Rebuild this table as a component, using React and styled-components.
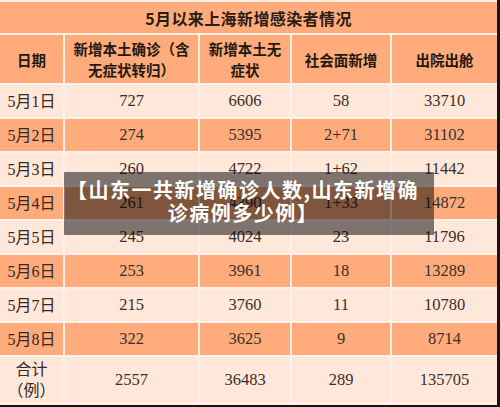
import React from 'react'
import styled, { createGlobalStyle } from 'styled-components'

const GlobalStyle = createGlobalStyle`
  html, body {
    margin: 0;
    padding: 0;
    background: #151515;
  }
`

const ORANGE = '#ffab7b'
const LIGHT = '#ffe7da'
const LINE = '#fff1e8'

const Frame = styled.div`
  position: relative;
  width: 497px;
  height: 405px;
  overflow: hidden;
  font-family: "Liberation Serif", "Noto Sans CJK SC", serif;
`

const Table = styled.table`
  width: 497px;
  table-layout: fixed;
  border-collapse: separate;
  border-spacing: 0;
  border-top: 2px solid ${LINE};
`

const Row = styled.tr`
  height: ${p => p.$h}px;
  background: ${p => (p.$tone === 'light' ? LIGHT : ORANGE)};
`

const TitleCell = styled.td`
  padding: 0;
  text-align: center;
  vertical-align: middle;
  border-bottom: 2px solid ${LINE};
  font-family: "Noto Sans CJK SC", sans-serif;
  font-weight: 700;
  font-size: 16px;
  letter-spacing: 0.4px;
  color: #2a1c12;
`

const HeadCell = styled.td`
  padding: 0 5px;
  text-align: center;
  vertical-align: middle;
  border-bottom: 2px solid ${LINE};
  border-right: ${p => (p.$last ? 'none' : `2px solid ${LINE}`)};
  font-family: "Noto Sans CJK SC", sans-serif;
  font-weight: 700;
  font-size: 14.5px;
  line-height: 21px;
  color: #231810;
`

const Cell = styled.td`
  padding: 0 4px;
  text-align: center;
  vertical-align: middle;
  border-bottom: 2px solid ${LINE};
  border-right: ${p => (p.$last ? 'none' : `2px solid ${LINE}`)};
  font-family: "Liberation Serif", "Noto Sans CJK SC", serif;
  font-size: 16.5px;
  line-height: 20px;
  color: #3a302a;
`

const DateCell = styled(Cell)`
  font-size: 16px;
  line-height: 21px;
  color: #332922;
`

const Overlay = styled.div`
  position: absolute;
  left: 64px;
  top: 172px;
  width: 370px;
  height: 63px;
  box-sizing: border-box;
  padding: 6px 12px 0 0;
  background: rgba(0, 0, 0, 0.5);
  color: #fff;
  text-align: center;
  font-family: "Noto Sans CJK SC", sans-serif;
  font-weight: 700;
  font-size: 20px;
  letter-spacing: 1.5px;
  line-height: 23px;
`

const rows = [
  ['5月1日', '727', '6606', '58', '33710'],
  ['5月2日', '274', '5395', '2+71', '31102'],
  ['5月3日', '260', '4722', '1+62', '11442'],
  ['5月4日', '261', '4390', '1+33', '14872'],
  ['5月5日', '245', '4024', '23', '11796'],
  ['5月6日', '253', '3961', '18', '13289'],
  ['5月7日', '215', '3760', '11', '10780'],
  ['5月8日', '322', '3625', '9', '8714']
]

export default function App () {
  return (
    <>
      <GlobalStyle />
      <Frame>
        <Table>
          <colgroup>
            <col style={{ width: 65 }} />
            <col style={{ width: 135 }} />
            <col style={{ width: 92 }} />
            <col style={{ width: 100 }} />
            <col style={{ width: 105 }} />
          </colgroup>
          <tbody>
            <Row $h={33}>
              <TitleCell colSpan={5}>5月以来上海新增感染者情况</TitleCell>
            </Row>
            <Row $h={50}>
              <HeadCell>日期</HeadCell>
              <HeadCell>新增本土确诊（含无症状转归）</HeadCell>
              <HeadCell>新增本土无症状</HeadCell>
              <HeadCell>社会面新增</HeadCell>
              <HeadCell $last>出院出舱</HeadCell>
            </Row>
            {rows.map((r, idx) => (
              <Row key={idx} $h={34} $tone={idx % 2 === 0 ? 'light' : 'orange'}>
                <DateCell>{r[0]}</DateCell>
                <Cell>{r[1]}</Cell>
                <Cell>{r[2]}</Cell>
                <Cell>{r[3]}</Cell>
                <Cell $last>{r[4]}</Cell>
              </Row>
            ))}
            <Row $h={48} $tone='light'>
              <DateCell>合计<br />（例）</DateCell>
              <Cell>2557</Cell>
              <Cell>36483</Cell>
              <Cell>289</Cell>
              <Cell $last>135705</Cell>
            </Row>
          </tbody>
        </Table>
        <Overlay>【山东一共新增确诊人数,山东新增确诊病例多少例】</Overlay>
      </Frame>
    </>
  )
}
